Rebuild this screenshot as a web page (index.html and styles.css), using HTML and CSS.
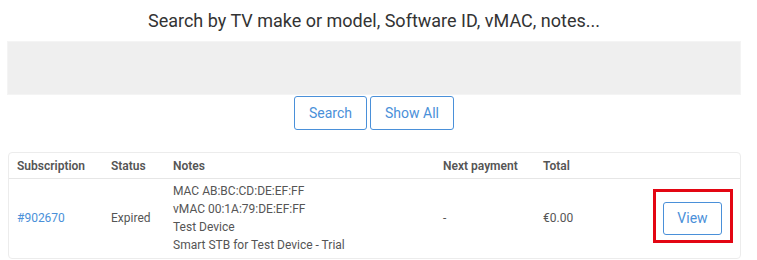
FILE: index.html
```html
<!DOCTYPE html>
<html lang="en">

<head>
    <meta charset="utf-8">
    <meta name="viewport" content="width=device-width, initial-scale=1.0">
    <title>Subscriptions</title>
    <link rel="stylesheet" href="styles.css">
</head>

<body>
    <div class="wrap">
        <h2 class="titel">Search by TV make or model, Software ID, vMAC, notes...</h2>
        <div class="soegefelt"></div>
        <div class="knapper">
            <button class="knap">Search</button>
            <button class="knap">Show All</button>
        </div>

        <table class="liste">
            <thead>
                <tr>
                    <th class="c-sub">Subscription</th>
                    <th class="c-status">Status</th>
                    <th class="c-notes">Notes</th>
                    <th class="c-next">Next payment</th>
                    <th class="c-total">Total</th>
                    <th class="c-action"></th>
                </tr>
            </thead>
            <tbody>
                <tr>
                    <td><a href="#">#902670</a></td>
                    <td>Expired</td>
                    <td>MAC AB:BC:CD:DE:EF:FF<br>vMAC 00:1A:79:DE:EF:FF<br>Test Device<br>Smart STB for Test Device - Trial</td>
                    <td>-</td>
                    <td>&euro;0.00</td>
                    <td class="c-action"><span class="markering"><button class="knap view">View</button></span></td>
                </tr>
            </tbody>
        </table>
    </div>
</body>

</html>
```

FILE: styles.css
```css
body {
    margin: 0;
    font-family: Roboto, "Liberation Sans", sans-serif;
    color: #555;
    background: white;
}

.wrap {
    width: 734px;
    margin-left: 7px;
}

.titel {
    margin: 0;
    padding-top: 9px;
    height: 41px;
    box-sizing: border-box;
    text-align: center;
    font-size: 18px;
    font-weight: 400;
    line-height: 24px;
    color: #333;
}

.soegefelt {
    height: 54px;
    background-color: #efefef;
    border: 1px solid #f4f4f4;
    box-sizing: border-box;
}

.knapper {
    display: flex;
    justify-content: center;
    gap: 3px;
    margin-top: 1px;
}

.knap {
    font-family: Roboto, "Liberation Sans", sans-serif;
    font-size: 14px;
    color: #4a90d9;
    background: white;
    border: 1px solid #4a90d9;
    border-radius: 3px;
    height: 34px;
    padding: 0 14px;
    cursor: pointer;
}

.liste {
    margin-top: 22px;
    width: 733px;
    margin-left: 1px;
    border-collapse: separate;
    border-spacing: 0;
    border: 1px solid #ececec;
    border-radius: 4px;
    font-size: 12px;
}

.liste th {
    text-align: left;
    font-weight: 600;
    color: #555;
    height: 25px;
    padding: 0 8px;
    border-bottom: 1px solid #e6e6e6;
}

.liste td {
    padding: 3px 8px 4px 8px;
    line-height: 18px;
    color: #555;
}

.liste a {
    color: #4a90d9;
    text-decoration: none;
}

.c-sub {
    width: 78px;
}

.c-status {
    width: 46px;
}

.c-notes {
    width: 254px;
}

.c-next {
    width: 84px;
}

.c-total {
    width: 84px;
}

.c-action {
    text-align: right;
}

.liste td.c-action {
    padding-right: 7px;
    line-height: 0;
}

.markering {
    display: inline-block;
    vertical-align: middle;
    border: 3px solid #e30613;
    padding: 10px 8px 5px 7px;
    margin-bottom: 5px;
    line-height: 0;
}

.view {
    width: 59px;
    height: 33px;
    padding: 0;
}
```
